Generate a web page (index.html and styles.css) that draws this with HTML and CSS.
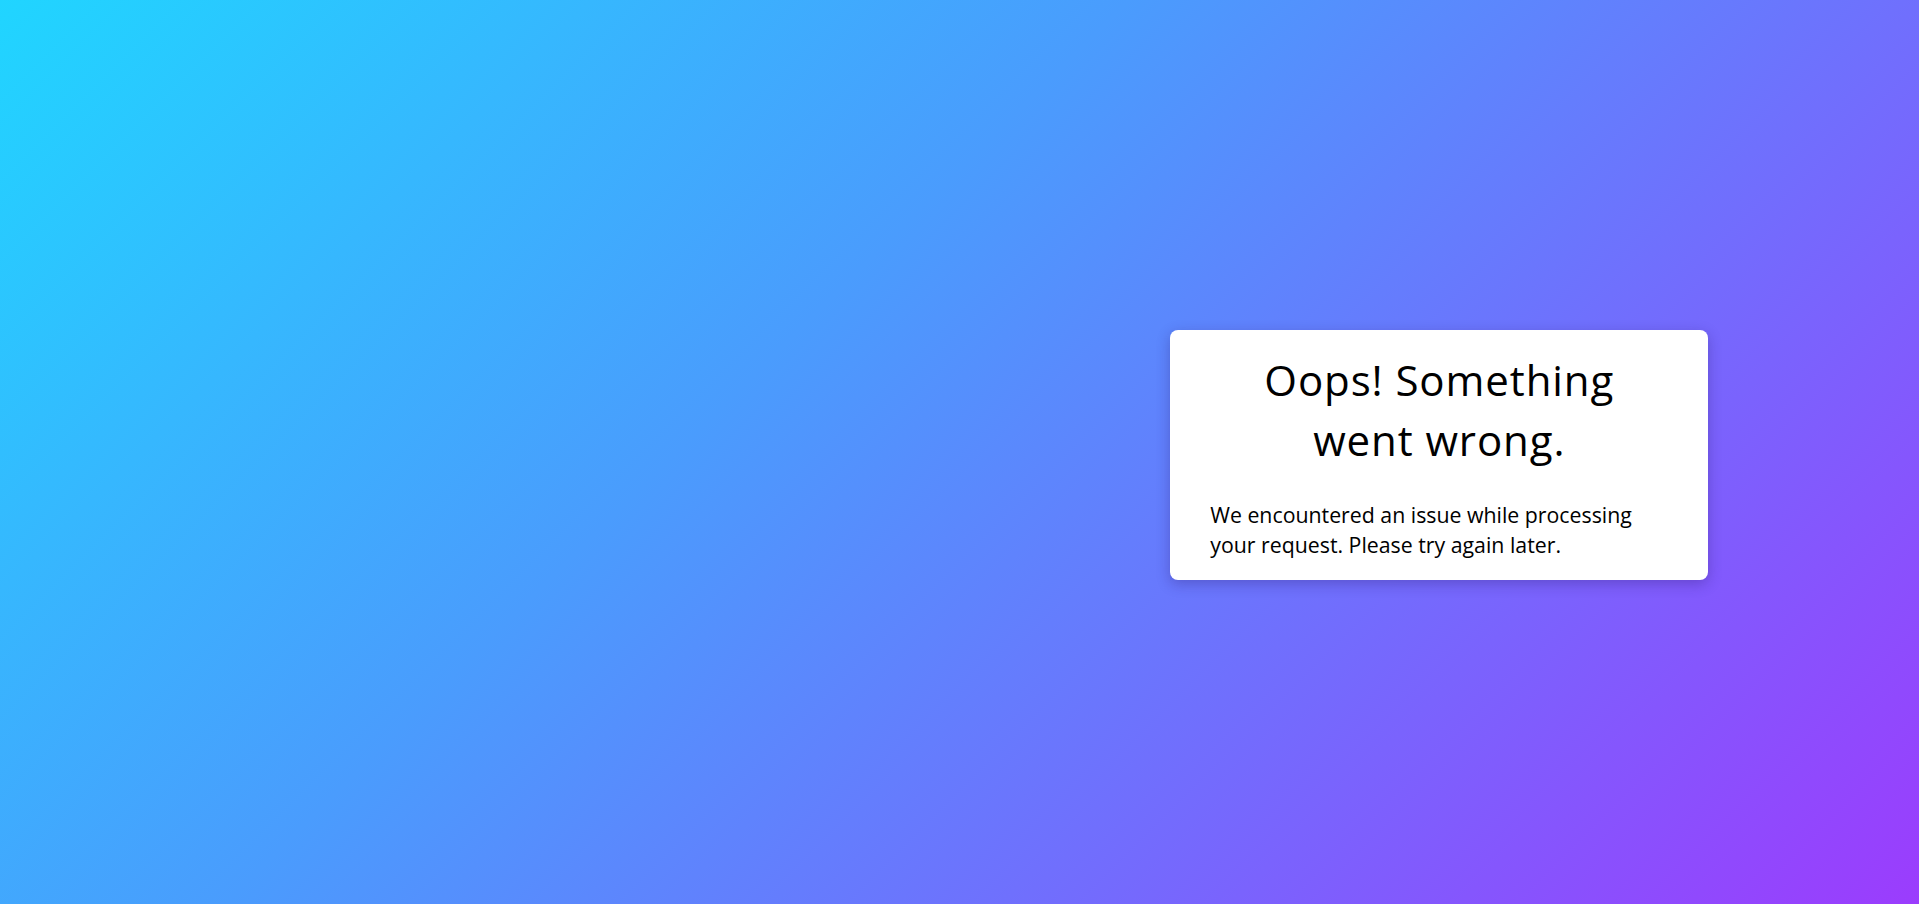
FILE: index.html
```html
<!DOCTYPE html>
<html lang="en">
<head>
<meta charset="utf-8">
<title>Error</title>
<link rel="stylesheet" href="styles.css">
</head>
<body>
<main class="page">
  <div class="spacer"></div>
  <div class="column">
    <section class="card">
      <h1 class="title">Oops! Something<br>went wrong.</h1>
      <p class="message">We encountered an issue while processing your request. Please try again later.</p>
    </section>
  </div>
</main>
</body>
</html>
```
FILE: styles.css
```css
html, body {
  margin: 0;
  padding: 0;
  height: 100%;
}
body {
  background: linear-gradient(135deg, #20d5ff 0%, #4a9cfd 40%, #9b3cfd 100%);
  font-family: "Open Sans", "Liberation Sans", sans-serif;
  color: #000;
}
.page {
  display: grid;
  grid-template-columns: 1fr 1fr;
  height: 100vh;
}
.column {
  display: flex;
  align-items: center;
  justify-content: center;
  padding-top: 6px;
}
.card {
  width: 458px;
  background: #fff;
  border-radius: 8px;
  padding: 20px 40px;
  box-shadow: 0 4px 14px rgba(40, 20, 100, 0.3);
}
.title {
  margin: 0 0 30px;
  font-size: 42px;
  line-height: 60px;
  font-weight: 500;
  letter-spacing: 0.9px;
  text-align: center;
}
.message {
  margin: 0;
  font-size: 21.3px;
  line-height: 30px;
  font-weight: 400;
  letter-spacing: 0;
}
```
